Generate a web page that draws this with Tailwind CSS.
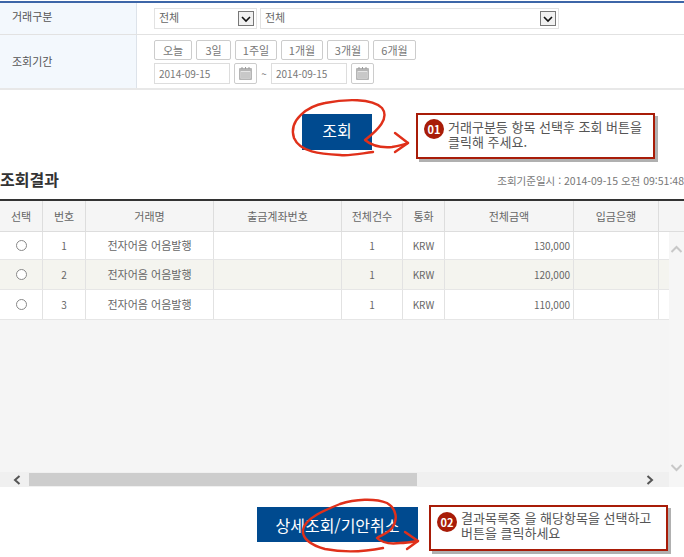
<!DOCTYPE html>
<html lang="ko">
  <head>
    <meta charset="UTF-8" />
    <title>조회결과</title>
    <script src="https://cdn.jsdelivr.net/npm/@tailwindcss/browser@4"></script>
  </head>
  <body class="font-['Noto_Sans_CJK_KR','Noto_Sans',sans-serif] text-[11px] text-[#666] bg-white">
    <div class="relative w-[684px] h-[557px] overflow-hidden">
      <!-- Search form -->
      <div class="mt-px border-t-2 border-[#3d66a8] border-b-2 border-b-[#e8e8e8]">
        <div class="flex h-[32px] border-b border-[#e2e2e2]">
          <div class="w-[137px] bg-[#f3f8fd] border-r border-[#dde3ea] pl-3 pb-1 flex items-center text-[#555]">거래구분</div>
          <div class="flex items-center pl-[17px] gap-[3px]">
            <div class="w-[103px] h-[21px] border border-[#e2e2e2] flex items-center justify-between pl-1 pr-[2px]">
              <span class="pb-[2px]">전체</span>
              <span class="w-4 h-[15px] border border-[#777] bg-[#f1f1f1] flex items-center justify-center">
                <svg width="10" height="8" viewBox="0 0 10 8"><path d="M1 2 L5 6 L9 2" fill="none" stroke="#111" stroke-width="1.6" /></svg>
              </span>
            </div>
            <div class="w-[299px] h-[21px] border border-[#e2e2e2] flex items-center justify-between pl-1 pr-[2px]">
              <span class="pb-[2px]">전체</span>
              <span class="w-4 h-[15px] border border-[#777] bg-[#f1f1f1] flex items-center justify-center">
                <svg width="10" height="8" viewBox="0 0 10 8"><path d="M1 2 L5 6 L9 2" fill="none" stroke="#111" stroke-width="1.6" /></svg>
              </span>
            </div>
          </div>
        </div>
        <div class="flex h-[53px]">
          <div class="w-[137px] bg-[#f3f8fd] border-r border-[#dde3ea] pl-3 flex items-center text-[#555]">조회기간</div>
          <div class="pl-[17px] pt-[5px] flex flex-col gap-[3px]">
            <div class="flex gap-1 text-[#777]">
              <span class="w-[38px] h-[20px] border border-[#ccc] rounded-[2px] flex items-center justify-center">오늘</span>
              <span class="w-[35px] h-[20px] border border-[#ccc] rounded-[2px] flex items-center justify-center">3일</span>
              <span class="w-[42px] h-[20px] border border-[#ccc] rounded-[2px] flex items-center justify-center">1주일</span>
              <span class="w-[42px] h-[20px] border border-[#ccc] rounded-[2px] flex items-center justify-center">1개월</span>
              <span class="w-[42px] h-[20px] border border-[#ccc] rounded-[2px] flex items-center justify-center">3개월</span>
              <span class="w-[43px] h-[20px] border border-[#ccc] rounded-[2px] flex items-center justify-center">6개월</span>
            </div>
            <div class="flex items-center text-[#777]">
              <span class="w-[76px] h-[21px] border border-[#ddd] flex items-center pl-1 text-[10px]">2014-09-15</span>
              <span class="ml-1 w-[23px] h-[21px] border border-[#ccc] rounded-[2px] flex items-center justify-center">
                <svg width="15" height="15" viewBox="0 0 15 15"><rect x="1" y="2" width="13" height="12" rx="1" fill="#b5b5b5" /><rect x="2.5" y="5" width="10" height="7.5" fill="#e6e6e6" /><path d="M3 7h9M3 9h9M3 11h9" stroke="#aaa" stroke-width="1" /><path d="M4 1v2M7.5 1v2M11 1v2" stroke="#999" stroke-width="1" /></svg>
              </span>
              <span class="w-[14px] text-center text-[10px]">~</span>
              <span class="w-[76px] h-[21px] border border-[#ddd] flex items-center pl-1 text-[10px]">2014-09-15</span>
              <span class="ml-1 w-[23px] h-[21px] border border-[#ccc] rounded-[2px] flex items-center justify-center">
                <svg width="15" height="15" viewBox="0 0 15 15"><rect x="1" y="2" width="13" height="12" rx="1" fill="#b5b5b5" /><rect x="2.5" y="5" width="10" height="7.5" fill="#e6e6e6" /><path d="M3 7h9M3 9h9M3 11h9" stroke="#aaa" stroke-width="1" /><path d="M4 1v2M7.5 1v2M11 1v2" stroke="#999" stroke-width="1" /></svg>
              </span>
            </div>
          </div>
        </div>
      </div>

      <!-- Search button + callout -->
      <div class="flex h-[76px] pt-[23px]">
        <div class="ml-[302px] mt-px w-[70px] h-[36px] bg-[#004a8f] text-white text-[16px] pb-1 flex items-center justify-center">조회</div>
        <div class="ml-[44px] w-[239px] h-[46px] border-2 border-[#a81c08] bg-white shadow-[3px_3px_0_#b0b0b0] flex pl-[6px] pt-[4px] gap-[4px]">
          <span class="w-[20px] h-[20px] shrink-0 rounded-full bg-[#a81c08] text-white font-bold text-[11px] flex items-center justify-center">01</span>
          <p class="text-[13px] leading-[15px] text-[#555] whitespace-nowrap">거래구분등 항목 선택후 조회 버튼을<br />클릭해 주세요.</p>
        </div>
      </div>

      <!-- Results heading -->
      <div class="flex justify-between items-center h-[33px] pb-[3px]">
        <h2 class="text-[16px] font-bold text-[#333] mb-1">조회결과</h2>
        <span class="text-[10.5px] text-[#777]">조회기준일시 : 2014-09-15 오전 09:51:48</span>
      </div>

      <!-- Results table -->
      <div class="border-t-2 border-[#333]">
        <div class="grid grid-cols-[43px_43px_128px_128px_61px_42px_129px_85px_25px] h-[31px] bg-[#f5f5f5] border-b border-[#ddd]">
          <div class="border-r border-[#ddd] flex items-center justify-center">선택</div>
          <div class="border-r border-[#ddd] flex items-center justify-center">번호</div>
          <div class="border-r border-[#ddd] flex items-center justify-center">거래명</div>
          <div class="border-r border-[#ddd] flex items-center justify-center">출금계좌번호</div>
          <div class="border-r border-[#ddd] flex items-center justify-center">전체건수</div>
          <div class="border-r border-[#ddd] flex items-center justify-center">통화</div>
          <div class="border-r border-[#ddd] flex items-center justify-center">전체금액</div>
          <div class="border-r border-[#ddd] flex items-center justify-center">입금은행</div>
          <div></div>
        </div>
        <div class="flex h-[255px]">
          <div class="w-[669px] flex flex-col">
            <div class="grid grid-cols-[43px_43px_128px_128px_61px_42px_129px_85px_10px] h-[28px] bg-white border-b border-[#e6e6e6]">
              <div class="border-r border-[#e2e2e2] flex items-center justify-center"><span class="w-[11px] h-[11px] rounded-full border border-[#888] bg-white"></span></div>
              <div class="border-r border-[#e2e2e2] flex items-center justify-center text-[10px]">1</div>
              <div class="border-r border-[#e2e2e2] flex items-center justify-center">전자어음 어음발행</div>
              <div class="border-r border-[#e2e2e2]"></div>
              <div class="border-r border-[#e2e2e2] flex items-center justify-center text-[10px]">1</div>
              <div class="border-r border-[#e2e2e2] flex items-center justify-center text-[10px]">KRW</div>
              <div class="border-r border-[#e2e2e2] flex items-center justify-end pr-[3px] text-[10px]">130,000</div>
              <div class="border-r border-[#e2e2e2]"></div>
              <div></div>
            </div>
            <div class="grid grid-cols-[43px_43px_128px_128px_61px_42px_129px_85px_10px] h-[30px] bg-[#f4f4ef] border-b border-[#e6e6e6]">
              <div class="border-r border-[#e2e2e2] flex items-center justify-center"><span class="w-[11px] h-[11px] rounded-full border border-[#888] bg-white"></span></div>
              <div class="border-r border-[#e2e2e2] flex items-center justify-center text-[10px]">2</div>
              <div class="border-r border-[#e2e2e2] flex items-center justify-center">전자어음 어음발행</div>
              <div class="border-r border-[#e2e2e2]"></div>
              <div class="border-r border-[#e2e2e2] flex items-center justify-center text-[10px]">1</div>
              <div class="border-r border-[#e2e2e2] flex items-center justify-center text-[10px]">KRW</div>
              <div class="border-r border-[#e2e2e2] flex items-center justify-end pr-[3px] text-[10px]">120,000</div>
              <div class="border-r border-[#e2e2e2]"></div>
              <div></div>
            </div>
            <div class="grid grid-cols-[43px_43px_128px_128px_61px_42px_129px_85px_10px] h-[30px] bg-white border-b border-[#e6e6e6]">
              <div class="border-r border-[#e2e2e2] flex items-center justify-center"><span class="w-[11px] h-[11px] rounded-full border border-[#888] bg-white"></span></div>
              <div class="border-r border-[#e2e2e2] flex items-center justify-center text-[10px]">3</div>
              <div class="border-r border-[#e2e2e2] flex items-center justify-center">전자어음 어음발행</div>
              <div class="border-r border-[#e2e2e2]"></div>
              <div class="border-r border-[#e2e2e2] flex items-center justify-center text-[10px]">1</div>
              <div class="border-r border-[#e2e2e2] flex items-center justify-center text-[10px]">KRW</div>
              <div class="border-r border-[#e2e2e2] flex items-center justify-end pr-[3px] text-[10px]">110,000</div>
              <div class="border-r border-[#e2e2e2]"></div>
              <div></div>
            </div>
            <div class="flex-1 bg-[#f5f5f5]"></div>
            <!-- Horizontal scrollbar -->
            <div class="h-[15px] bg-[#f0f0f0] flex items-center">
              <span class="w-[29px] flex justify-center pl-1">
                <svg width="10" height="10" viewBox="0 0 10 10"><path d="M7.5 1 L3 5 L7.5 9" fill="none" stroke="#555" stroke-width="2" /></svg>
              </span>
              <span class="w-[388px] h-[13px] bg-[#cdcdcd]"></span>
              <span class="ml-[228px]">
                <svg width="10" height="10" viewBox="0 0 10 10"><path d="M2.5 1 L7 5 L2.5 9" fill="none" stroke="#555" stroke-width="2" /></svg>
              </span>
            </div>
          </div>
          <!-- Vertical scrollbar -->
          <div class="w-[15px] bg-[#f6f6f6] flex flex-col items-center justify-between pt-[13px] pb-[15px]">
            <svg width="13" height="8" viewBox="0 0 13 8"><path d="M1.5 7 L6.5 2 L11.5 7" fill="none" stroke="#c8c8c8" stroke-width="2" /></svg>
            <svg width="13" height="8" viewBox="0 0 13 8"><path d="M1.5 1 L6.5 6 L11.5 1" fill="none" stroke="#c8c8c8" stroke-width="2" /></svg>
          </div>
        </div>
      </div>

      <!-- Detail button + callout -->
      <div class="flex pt-[19px]">
        <div class="ml-[257px] mt-px w-[161px] h-[35px] bg-[#004a8f] text-white text-[16px] flex items-center justify-center">상세조회/기안취소</div>
        <div class="ml-[11px] -mt-px w-[239px] h-[46px] border-2 border-[#a81c08] bg-white shadow-[3px_3px_0_#b0b0b0] flex pl-[6px] pt-[3px] gap-[4px]">
          <span class="w-[20px] h-[20px] mt-[2px] shrink-0 rounded-full bg-[#a81c08] text-white font-bold text-[11px] flex items-center justify-center">02</span>
          <p class="text-[13px] leading-[15px] text-[#555] whitespace-nowrap">결과목록중 을 해당항목을 선택하고<br />버튼을 클릭하세요</p>
        </div>
      </div>

      <!-- Hand drawn marks over the buttons -->
      <svg class="absolute inset-0 pointer-events-none" width="684" height="557" viewBox="0 0 684 557" fill="none" stroke="#e0301a" stroke-width="2.4" stroke-linecap="round" stroke-linejoin="round">
        <path d="M373 152 C358 154 350 156 340 155 C320 154 300 152 294 138 C288 120 308 106 325 103 C345 99 372 98 382 108 C390 118 378 130 365 140 C372 146 380 148 392 147 C398 146 403 145 408 143" />
        <path d="M395 133 L408 143 L395 152" />
        <path d="M383 548 C368 551 345 553 325 549 C310 545 302 538 303 530 C305 518 325 510 340 504 C355 499 375 498 387 503 C397 509 398 520 392 528 C388 533 382 535 377 538 C382 543 392 544 400 543 C406 543 412 542 418 541" />
        <path d="M405 532 L418 541 L407 549" />
      </svg>
    </div>
  </body>
</html>
